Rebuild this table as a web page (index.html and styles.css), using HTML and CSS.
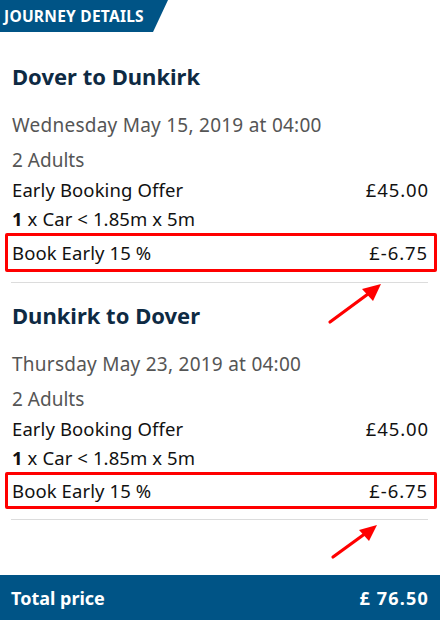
FILE: index.html
```html
<!DOCTYPE html>
<html>
<head>
<meta charset="utf-8">
<link rel="stylesheet" href="styles.css">
</head>
<body>
<div class="page">
  <div class="tab"><span>JOURNEY DETAILS</span></div>

  <section class="journey first">
    <h2 class="route">Dover to Dunkirk</h2>
    <div class="date">Wednesday May 15, 2019 at 04:00</div>
    <div class="pax">2 Adults</div>
    <div class="row"><span>Early Booking Offer</span><span class="price">£45.00</span></div>
    <div class="row"><span><b>1</b> x Car &lt; 1.85m x 5m</span></div>
    <div class="row boxed"><span>Book Early 15 %</span><span class="price">£-6.75</span></div>
    <hr class="sep">
  </section>

  <section class="journey second">
    <h2 class="route">Dunkirk to Dover</h2>
    <div class="date">Thursday May 23, 2019 at 04:00</div>
    <div class="pax">2 Adults</div>
    <div class="row"><span>Early Booking Offer</span><span class="price">£45.00</span></div>
    <div class="row"><span><b>1</b> x Car &lt; 1.85m x 5m</span></div>
    <div class="row boxed"><span>Book Early 15 %</span><span class="price">£-6.75</span></div>
    <hr class="sep">
  </section>

  <div class="spacer"></div>

  <footer class="total"><span>Total price</span><span class="amount">£ 76.50</span></footer>

  <svg class="arrow" width="440" height="620" viewBox="0 0 440 620">
    <line x1="330" y1="322" x2="368" y2="294" stroke="#ff0000" stroke-width="3.2" stroke-linecap="round"/>
    <polygon points="381,284 362,289 373,301" fill="#ff0000"/>
    <line x1="333" y1="557" x2="366" y2="533" stroke="#ff0000" stroke-width="3.2" stroke-linecap="round"/>
    <polygon points="377,525 359,530 369,541" fill="#ff0000"/>
  </svg>
</div>
</body>
</html>
```
FILE: styles.css
```css
* { box-sizing: border-box; }
html, body { margin: 0; padding: 0; }
body {
  font-family: "Noto Sans", "Open Sans", sans-serif;
  background: #fff;
  color: #111;
}
.page {
  position: relative;
  width: 440px;
  height: 620px;
  display: flex;
  flex-direction: column;
  overflow: hidden;
}
.tab {
  height: 32px;
  width: 168px;
  background: #005486;
  clip-path: polygon(0 0, 168px 0, 153px 100%, 0 100%);
  color: #fff;
  font-weight: 700;
  font-size: 15.5px;
  line-height: 32px;
  padding-left: 4px;
  letter-spacing: 0.25px;
  white-space: nowrap;
}
.journey {
  padding: 0 12px;
}
.journey.first { padding-top: 28px; }
.journey.second { padding-top: 16px; }
.route {
  margin: 0;
  font-size: 22px;
  line-height: 32px;
  font-weight: 700;
  color: #0e2a43;
}
.date {
  margin-top: 18px;
  font-size: 19px;
  line-height: 30px;
  color: #555;
  letter-spacing: 0.25px;
}
.pax {
  margin-top: 5px;
  font-size: 19px;
  line-height: 30px;
  color: #555;
}
.row {
  display: flex;
  justify-content: space-between;
  font-size: 18.5px;
  line-height: 29px;
  color: #111;
  letter-spacing: 0.1px;
}
.row b { font-weight: 700; }
.price { letter-spacing: 0.9px; margin-right: -1px; }
.boxed {
  margin: 0 -9px 0 -7px;
  border: 3px solid #ff0000;
  border-radius: 2px;
  padding: 0 7px 0 4px;
  line-height: 33px;
}
.second .boxed { line-height: 31px; }
.sep {
  margin: 10px 0 0 -1px;
  border: 0;
  border-top: 1px solid #dcdcdc;
  height: 0;
}
.spacer { flex: 1; }
.total {
  height: 45px;
  background: #005486;
  color: #fff;
  font-weight: 700;
  font-size: 18px;
  display: flex;
  justify-content: space-between;
  align-items: center;
  padding: 0 12px 0 11px;
}
.amount { letter-spacing: 1.2px; margin-right: -1px; }
.arrow {
  position: absolute;
  left: 0;
  top: 0;
  pointer-events: none;
}
```
